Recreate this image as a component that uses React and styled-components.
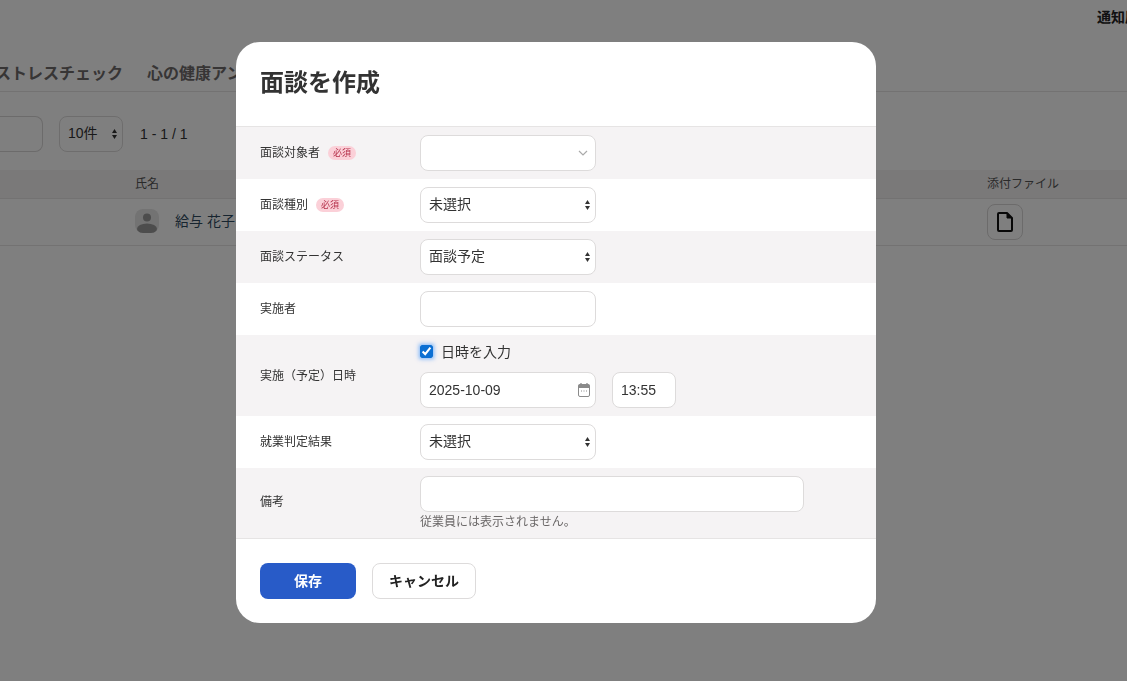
import React from 'react'
import styled, { createGlobalStyle } from 'styled-components'

const GlobalStyle = createGlobalStyle`
  html, body {
    margin: 0;
    height: 100%;
    overflow: hidden;
    background: #fff;
  }
  * { box-sizing: border-box; }
  body, input, select, button {
    font-family: "Liberation Sans", "Noto Sans CJK JP", sans-serif;
  }
`

// native select with the little up/down arrows drawn over it
function SelectField({ options, width = 176 }) {
  return (
    <SelectWrap $width={width}>
      <Select defaultValue={options[0]}>
        {options.map((o) => (
          <option key={o} value={o}>{o}</option>
        ))}
      </Select>
      <SelectArrows width="5" height="10" viewBox="0 0 5 10">
        <path d="M0 4L2.500 0L5 4Z M0 6L5 6L2.500 10Z" fill="#333" />
      </SelectArrows>
    </SelectWrap>
  )
}

function App() {
  return (
    <>
      <GlobalStyle />
      <Page>
        <TopBar>
          <Notice>通知履歴</Notice>
        </TopBar>
        <Tabs>
          <Tab>ストレスチェック</Tab>
          <Tab>心の健康アンケート</Tab>
        </Tabs>
        <Toolbar>
          <SearchBox />
          <PerPage>
            <SelectField options={['10件']} width={64} />
          </PerPage>
          <Pager>1 - 1 / 1</Pager>
        </Toolbar>
        <TableHead>
          <span />
          <span>氏名</span>
          <span>添付ファイル</span>
        </TableHead>
        <TableRow>
          <span />
          <NameCell>
            <Avatar>
              <svg width="24" height="24" viewBox="0 0 24 24">
                <circle cx="12" cy="8.500" r="4" fill="#9a9a9a" />
                <ellipse cx="12" cy="20" rx="10" ry="5.500" fill="#9a9a9a" />
              </svg>
            </Avatar>
            <Name>給与 花子</Name>
          </NameCell>
          <FileButton>
            <svg width="16" height="20" viewBox="0 0 16 20" fill="none">
              <path d="M2 1h8l5 5v12a1 1 0 0 1-1 1H2a1 1 0 0 1-1-1V2a1 1 0 0 1 1-1z" stroke="#111" strokeWidth="2" strokeLinejoin="round" />
              <path d="M10 1v5h5z" fill="#111" stroke="#111" strokeWidth="1" strokeLinejoin="round" />
            </svg>
          </FileButton>
        </TableRow>
      </Page>

      <Overlay>
        <Modal>
          <ModalHeader>
            <Title>面談を作成</Title>
          </ModalHeader>

          <FormRow $shade>
            <Label>
              面談対象者<Required>必須</Required>
            </Label>
            <ComboBox>
              <svg width="10" height="6" viewBox="0 0 10 6" fill="none">
                <path d="M1 1l4 4 4-4" stroke="#aaa" strokeWidth="1.200" />
              </svg>
            </ComboBox>
          </FormRow>

          <FormRow>
            <Label>
              面談種別<Required>必須</Required>
            </Label>
            <SelectField options={['未選択']} />
          </FormRow>

          <FormRow $shade>
            <Label>面談ステータス</Label>
            <SelectField options={['面談予定']} />
          </FormRow>

          <FormRow>
            <Label>実施者</Label>
            <TextInput />
          </FormRow>

          <DateRow $shade>
            <Label>実施（予定）日時</Label>
            <DateFields>
              <CheckLine>
                <Check type="checkbox" defaultChecked />
                日時を入力
              </CheckLine>
              <DateLine>
                <DateWrap>
                  <TextInput defaultValue="2025-10-09" />
                  <CalendarIcon width="12" height="14" viewBox="0 0 12 14" fill="none">
                    <path d="M3 0v3M9 0v3" stroke="#8a8a8a" strokeWidth="1.300" />
                    <rect x="0.500" y="1.500" width="11" height="12" rx="1.500" stroke="#8a8a8a" />
                    <rect x="0.500" y="1.500" width="11" height="3.500" fill="#8a8a8a" />
                    <path d="M3 8h1M5.500 8h1M8 8h1" stroke="#8a8a8a" />
                  </CalendarIcon>
                </DateWrap>
                <TimeInput defaultValue="13:55" />
              </DateLine>
            </DateFields>
          </DateRow>

          <FormRow>
            <Label>就業判定結果</Label>
            <SelectField options={['未選択']} />
          </FormRow>

          <NoteRow $shade>
            <NoteLabel>備考</NoteLabel>
            <div>
              <WideInput />
              <Help>従業員には表示されません。</Help>
            </div>
          </NoteRow>

          <ModalFooter>
            <SaveButton>保存</SaveButton>
            <CancelButton>キャンセル</CancelButton>
          </ModalFooter>
        </Modal>
      </Overlay>
    </>
  )
}

export default App

const Page = styled.div`
  width: 100%;
  height: 100vh;
  overflow: hidden;
  color: #333;
`

const TopBar = styled.div`
  height: 34px;
  padding: 6px 0 0 1097px;
  white-space: nowrap;
`

const Notice = styled.span`
  font-size: 14px;
  font-weight: 700;
  line-height: 22px;
  color: #222;
`

const Tabs = styled.div`
  display: flex;
  gap: 24px;
  height: 58px;
  padding-top: 28px;
  margin-left: -5px;
  border-bottom: 1px solid #e6e4e4;
  white-space: nowrap;
`

const Tab = styled.div`
  font-size: 16px;
  font-weight: 700;
  line-height: 24px;
  color: #6f6b6b;
`

const Toolbar = styled.div`
  display: flex;
  align-items: center;
  height: 36px;
  margin-top: 24px;
  color: #333;
`

const SearchBox = styled.div`
  width: 43px;
  height: 36px;
  border: 1px solid #d8d6d6;
  border-left: 0;
  border-radius: 0 8px 8px 0;
`

const PerPage = styled.div`
  margin-left: 16px;
`

const Pager = styled.div`
  margin-left: 17px;
  font-size: 14px;
`

const TableHead = styled.div`
  display: grid;
  grid-template-columns: 135px 1fr 140px;
  align-items: center;
  height: 29px;
  margin-top: 18px;
  background: #f4f2f3;
  border-bottom: 1px solid #e6e4e4;
  font-size: 12px;
  line-height: 16px;
  color: #555;
`

const TableRow = styled.div`
  display: grid;
  grid-template-columns: 135px 1fr 140px;
  align-items: center;
  height: 47px;
  border-bottom: 1px solid #e6e4e4;
`

const NameCell = styled.div`
  display: flex;
  align-items: center;
  gap: 16px;
  padding-bottom: 2px;
`

const Avatar = styled.div`
  width: 24px;
  height: 24px;
  border-radius: 8px;
  overflow: hidden;
  background: #e6e6e6;
  svg { display: block; }
`

const Name = styled.span`
  font-size: 14px;
  line-height: 20px;
  color: #2f4a60;
`

const FileButton = styled.button`
  display: flex;
  align-items: center;
  justify-content: center;
  width: 36px;
  height: 36px;
  padding: 0;
  background: #fff;
  border: 1px solid #d8d6d6;
  border-radius: 8px;
`

const Overlay = styled.div`
  position: fixed;
  inset: 0;
  display: flex;
  justify-content: center;
  align-items: flex-start;
  padding: 42px 15px 0 0;
  background: rgba(0, 0, 0, 0.5);
`

const Modal = styled.div`
  width: 640px;
  background: #fff;
  border-radius: 24px;
  overflow: hidden;
  color: #333;
`

const ModalHeader = styled.div`
  height: 85px;
  padding: 24px;
  border-bottom: 1px solid #e6e4e4;
`

const Title = styled.h2`
  margin: 0;
  font-size: 24px;
  line-height: 34px;
  font-weight: 700;
  color: #333;
`

const FormRow = styled.div`
  display: flex;
  align-items: center;
  height: 52px;
  padding-left: 24px;
  background: ${(props) => (props.$shade ? '#f5f3f4' : '#fff')};
`

const DateRow = styled(FormRow)`
  height: 81px;
`

const NoteRow = styled(FormRow)`
  height: 70px;
  align-items: flex-start;
  padding-top: 8px;
`

const Label = styled.span`
  display: flex;
  align-items: center;
  flex: 0 0 160px;
  font-size: 12px;
  line-height: 16px;
  color: #333;
`

const NoteLabel = styled(Label)`
  margin-top: 18px;
`

const Required = styled.span`
  margin-left: 8px;
  padding: 0 5px;
  font-size: 9px;
  line-height: 14px;
  color: #b5304a;
  background: #fbd0d8;
  border-radius: 7px;
`

const ComboBox = styled.div`
  display: flex;
  align-items: center;
  justify-content: flex-end;
  width: 176px;
  height: 36px;
  padding-right: 7px;
  background: #fff;
  border: 1px solid #dddbdb;
  border-radius: 8px;
`

const SelectWrap = styled.div`
  position: relative;
  width: ${(props) => props.$width}px;
  height: 36px;
`

const Select = styled.select`
  appearance: none;
  display: block;
  width: 100%;
  height: 36px;
  padding: 0 16px 2px 8px;
  font-size: 14px;
  color: #333;
  background: #fff;
  border: 1px solid #dddbdb;
  border-radius: 8px;
`

const SelectArrows = styled.svg`
  position: absolute;
  top: 13px;
  right: 6.500px;
  pointer-events: none;
`

const TextInput = styled.input`
  display: block;
  width: 176px;
  height: 36px;
  padding: 0 8px 1px;
  font-size: 14px;
  color: #333;
  background: #fff;
  border: 1px solid #dddbdb;
  border-radius: 8px;
`

const DateFields = styled.div`
  display: flex;
  flex-direction: column;
  gap: 11px;
`

const CheckLine = styled.label`
  display: flex;
  align-items: center;
  gap: 8px;
  height: 18px;
  font-size: 14px;
  line-height: 18px;
  color: #333;
`

const Check = styled.input`
  width: 13px;
  height: 13px;
  margin: 0 0 2px;
  accent-color: #0b6fd3;
  box-shadow: 0 0 4px 1px rgba(0, 117, 255, 0.5);
  border-radius: 2px;
`

const DateLine = styled.div`
  display: flex;
  gap: 16px;
`

const DateWrap = styled.div`
  position: relative;
`

const CalendarIcon = styled.svg`
  position: absolute;
  top: 11px;
  right: 6px;
  pointer-events: none;
`

const TimeInput = styled(TextInput)`
  width: 64px;
`

const WideInput = styled(TextInput)`
  width: 384px;
`

const Help = styled.div`
  margin-top: 2px;
  font-size: 12px;
  line-height: 16px;
  color: #6b6868;
`

const ModalFooter = styled.div`
  display: flex;
  gap: 16px;
  height: 85px;
  padding: 24px;
  border-top: 1px solid #e6e4e4;
`

const SaveButton = styled.button`
  width: 96px;
  height: 36px;
  padding: 0 0 2px;
  font-size: 14px;
  font-weight: 700;
  color: #fff;
  background: #285bc8;
  border: 0;
  border-radius: 8px;
`

const CancelButton = styled.button`
  width: 104px;
  height: 36px;
  padding: 0 0 2px;
  font-size: 14px;
  font-weight: 700;
  color: #222;
  background: #fff;
  border: 1px solid #dddbdb;
  border-radius: 8px;
`
